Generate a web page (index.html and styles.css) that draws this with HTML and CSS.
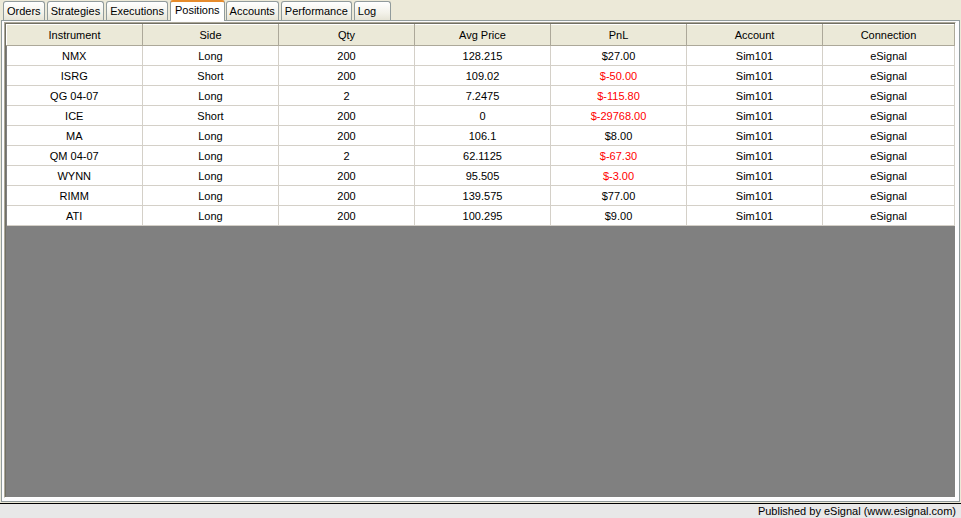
FILE: index.html
```html
<!DOCTYPE html>
<html lang="en">
<head>
  <meta charset="UTF-8" />
  <title>Positions</title>
  <link rel="stylesheet" href="styles.css">
</head>
<body>
  <div class="tabs">
    <div class="tab">Orders</div>
    <div class="tab">Strategies</div>
    <div class="tab">Executions</div>
    <div class="tab active">Positions</div>
    <div class="tab">Accounts</div>
    <div class="tab">Performance</div>
    <div class="tab log">Log</div>
  </div>

  <div class="panel">
    <div class="grid">
      <table>
        <thead>
          <tr>
            <th>Instrument</th><th>Side</th><th>Qty</th><th>Avg Price</th><th>PnL</th><th>Account</th><th>Connection</th>
          </tr>
        </thead>
        <tbody>
          <tr><td>NMX</td><td>Long</td><td>200</td><td>128.215</td><td>$27.00</td><td>Sim101</td><td>eSignal</td></tr>
          <tr><td>ISRG</td><td>Short</td><td>200</td><td>109.02</td><td class="neg">$-50.00</td><td>Sim101</td><td>eSignal</td></tr>
          <tr><td>QG 04-07</td><td>Long</td><td>2</td><td>7.2475</td><td class="neg">$-115.80</td><td>Sim101</td><td>eSignal</td></tr>
          <tr><td>ICE</td><td>Short</td><td>200</td><td>0</td><td class="neg">$-29768.00</td><td>Sim101</td><td>eSignal</td></tr>
          <tr><td>MA</td><td>Long</td><td>200</td><td>106.1</td><td>$8.00</td><td>Sim101</td><td>eSignal</td></tr>
          <tr><td>QM 04-07</td><td>Long</td><td>2</td><td>62.1125</td><td class="neg">$-67.30</td><td>Sim101</td><td>eSignal</td></tr>
          <tr><td>WYNN</td><td>Long</td><td>200</td><td>95.505</td><td class="neg">$-3.00</td><td>Sim101</td><td>eSignal</td></tr>
          <tr><td>RIMM</td><td>Long</td><td>200</td><td>139.575</td><td>$77.00</td><td>Sim101</td><td>eSignal</td></tr>
          <tr><td>ATI</td><td>Long</td><td>200</td><td>100.295</td><td>$9.00</td><td>Sim101</td><td>eSignal</td></tr>
        </tbody>
      </table>
    </div>
  </div>

  <div class="status">Published by eSignal (www.esignal.com)</div>
</body>
</html>
```

FILE: styles.css
```css
body {
  margin: 0;
  background-color: #ece9d8;
  font-family: "Liberation Sans", Arial, sans-serif;
  font-size: 11px;
  color: #000;
  width: 961px;
  height: 518px;
  overflow: hidden;
}
.tabs {
  display: flex;
  align-items: flex-end;
  height: 20px;
  padding-left: 3px;
  position: relative;
  z-index: 1;
}
.tab {
  height: 19px;
  line-height: 19px;
  padding: 0 3px;
  margin-right: 2px;
  border: 1px solid #919b9c;
  border-bottom: none;
  border-radius: 3px 3px 0 0;
  background: linear-gradient(#ffffff, #f3f2ea 60%, #e6e4d6);
  box-sizing: border-box;
}
.tab.active {
  background: #fff;
  border-top: 2px solid #e68b2c;
  height: 21px;
  line-height: 17px;
  margin-bottom: -1px;
  margin-right: 1px;
  padding: 0 4px;
}
.tab.log {
  width: 37px;
}
.panel {
  margin: 0 1px;
  height: 482px;
  border: 1px solid #919b9c;
  background: #fcfcfe;
  box-sizing: border-box;
  padding: 1px 3px 3px 2px;
}
.grid {
  height: 100%;
  background: #808080;
  border-top: 1px solid #aca899;
  border-left: 1px solid #aca899;
  border-right: 1px solid #fff;
  border-bottom: 1px solid #fff;
  box-sizing: border-box;
  box-shadow: inset 1px 1px 0 #716f64;
}
table {
  width: 949px;
  margin-left: 1px;
  margin-top: 1px;
  border-collapse: collapse;
  table-layout: fixed;
}
th {
  width: 136px;
  height: 21px;
  padding: 0;
  font-weight: normal;
  background: #ebe9d8;
  border-top: 1px solid #fff;
  border-left: 1px solid #fff;
  border-right: 1px solid #aca899;
  border-bottom: 1px solid #aca899;
  box-sizing: border-box;
}
th:last-child {
  width: auto;
}
td {
  height: 20px;
  padding: 0;
  text-align: center;
  background: #fff;
  border-right: 1px solid #d4d0c8;
  border-bottom: 1px solid #d4d0c8;
  box-sizing: border-box;
}
td.neg {
  color: #ff0000;
}
.status {
  margin-top: 1px;
  height: 15px;
  border-top: 1px solid #000;
  background: #e8e8e8;
  text-align: right;
  padding-right: 5px;
  line-height: 14px;
}
```
